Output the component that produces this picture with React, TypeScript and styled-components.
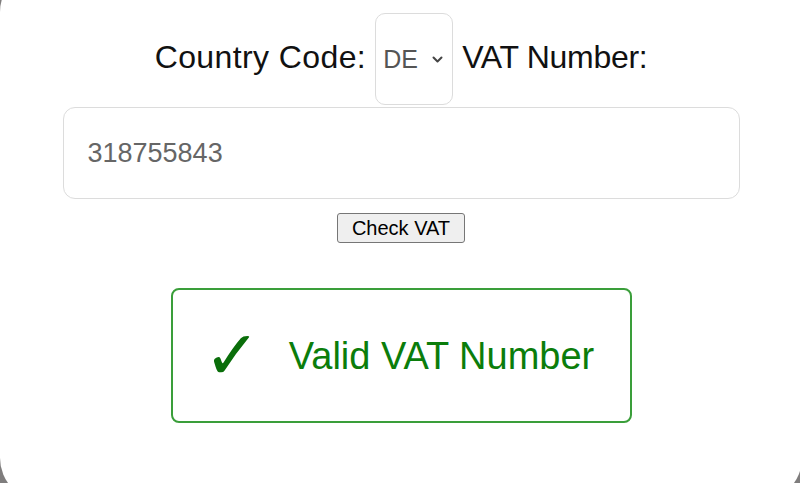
import React from "react";
import styled, { createGlobalStyle } from "styled-components";

const Global = createGlobalStyle`
  html, body {
    margin: 0;
    padding: 0;
    background: #7f7d7d;
    overflow: hidden;
    width: 800px;
    height: 483px;
  }
  * { box-sizing: border-box; }
`;

const Card = styled.div`
  width: 802px;
  height: 532px;
  margin-top: -31px;
  background: #ffffff;
  border-radius: 43px;
  padding-top: 44px;
  display: flex;
  flex-direction: column;
  align-items: center;
  font-family: "Liberation Sans", Arial, sans-serif;
  color: #111;
`;

const LabelRow = styled.div`
  display: flex;
  align-items: baseline;
  justify-content: center;
  gap: 9px;
  font-size: 32px;
  line-height: 1;
`;

const Label = styled.label<{ $spacing?: number }>`
  font-size: 32px;
  color: #111;
  letter-spacing: ${(p) => p.$spacing ?? 0}px;
`;

const SelectWrap = styled.span`
  position: relative;
  display: inline-flex;
`;

const Select = styled.select`
  appearance: none;
  -webkit-appearance: none;
  width: 78px;
  height: 92px;
  padding: 0 0 0 7px;
  font-family: "Liberation Sans", Arial, sans-serif;
  font-size: 25px;
  color: #555;
  background: #fff;
  border: 1px solid #dcdcdc;
  border-radius: 10px;
`;

const Chevron = styled.svg`
  position: absolute;
  right: 10px;
  top: 43px;
  width: 11px;
  height: 7px;
  pointer-events: none;
`;

const Input = styled.input`
  width: 677px;
  height: 92px;
  margin-top: 2px;
  padding: 0 24px;
  font-family: "Liberation Sans", Arial, sans-serif;
  font-size: 27px;
  color: #666;
  background: #fff;
  border: 1px solid #dcdcdc;
  border-radius: 12px;
  outline: none;
`;

const Button = styled.button`
  margin-top: 14px;
  width: 128px;
  height: 30px;
  padding: 0;
  font-family: "Liberation Sans", Arial, sans-serif;
  font-size: 20px;
  color: #000;
  background: #efefef;
  border: 1px solid #767676;
  border-radius: 3px;
`;

const Result = styled.div`
  margin-top: 45px;
  width: 461px;
  height: 135px;
  border: 2px solid #3a9e3a;
  border-radius: 8px;
  display: flex;
  align-items: center;
  justify-content: center;
  gap: 28px;
  padding-right: 4px;
  color: #0b7d0b;
`;

const Check = styled.span`
  font-family: "DejaVu Sans", sans-serif;
  font-size: 68px;
  line-height: 1;
  color: #0a6e0a;
`;

const ResultText = styled.span`
  font-size: 38px;
  line-height: 1;
`;

export default function App() {
  return (
    <>
      <Global />
      <Card>
        <LabelRow>
          <Label htmlFor="cc" $spacing={0.4}>Country Code:</Label>
          <SelectWrap>
            <Select id="cc" defaultValue="DE">
              <option value="DE">DE</option>
              <option value="FR">FR</option>
              <option value="IT">IT</option>
            </Select>
            <Chevron viewBox="0 0 11 7" aria-hidden="true">
              <path d="M1.5 1.5 L5.5 5.5 L9.5 1.5" fill="none" stroke="#444" strokeWidth="2" strokeLinecap="round" strokeLinejoin="round" />
            </Chevron>
          </SelectWrap>
          <Label htmlFor="vat" $spacing={-0.3}>VAT Number:</Label>
        </LabelRow>
        <Input id="vat" defaultValue="318755843" />
        <Button>Check VAT</Button>
        <Result>
          <Check>✓</Check>
          <ResultText>Valid VAT Number</ResultText>
        </Result>
      </Card>
    </>
  );
}
